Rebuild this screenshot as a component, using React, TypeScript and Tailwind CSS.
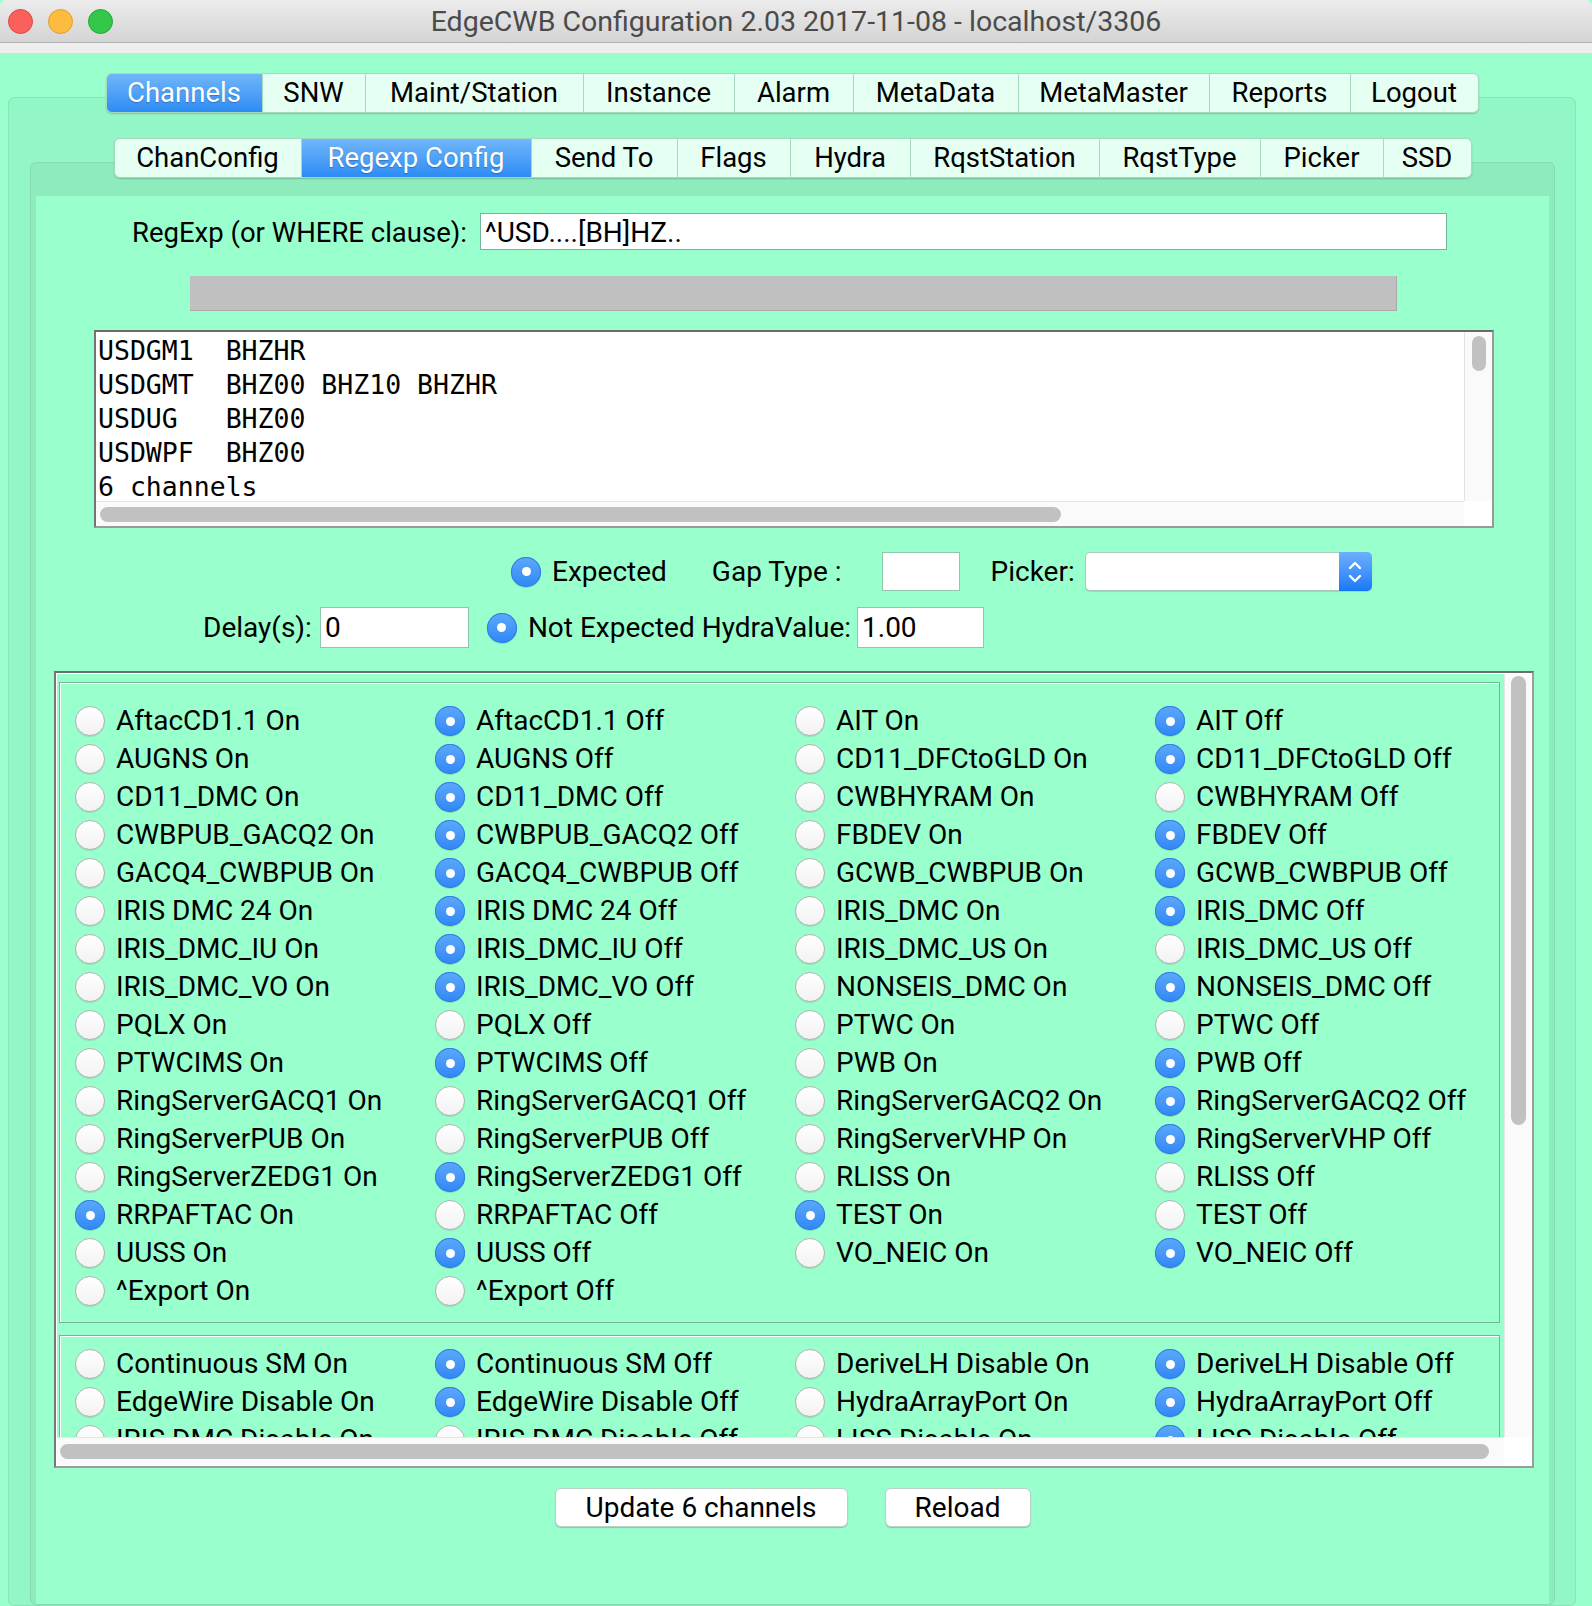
import React from 'react'

type Flag = { label: string; on: boolean }

const row = (a: string, b: boolean, c: string, d: boolean): Flag[] => [
  { label: `${a} On`, on: false },
  { label: `${a} Off`, on: b },
  { label: `${c} On`, on: false },
  { label: `${c} Off`, on: d },
]

const mainFlags: Flag[] = [
  ...row('AftacCD1.1', true, 'AIT', true),
  ...row('AUGNS', true, 'CD11_DFCtoGLD', true),
  ...row('CD11_DMC', true, 'CWBHYRAM', false),
  ...row('CWBPUB_GACQ2', true, 'FBDEV', true),
  ...row('GACQ4_CWBPUB', true, 'GCWB_CWBPUB', true),
  ...row('IRIS DMC 24', true, 'IRIS_DMC', true),
  ...row('IRIS_DMC_IU', true, 'IRIS_DMC_US', false),
  ...row('IRIS_DMC_VO', true, 'NONSEIS_DMC', true),
  ...row('PQLX', false, 'PTWC', false),
  ...row('PTWCIMS', true, 'PWB', true),
  ...row('RingServerGACQ1', false, 'RingServerGACQ2', true),
  ...row('RingServerPUB', false, 'RingServerVHP', true),
  ...row('RingServerZEDG1', true, 'RLISS', false),
  { label: 'RRPAFTAC On', on: true },
  { label: 'RRPAFTAC Off', on: false },
  { label: 'TEST On', on: true },
  { label: 'TEST Off', on: false },
  ...row('UUSS', true, 'VO_NEIC', true),
  { label: '^Export On', on: false },
  { label: '^Export Off', on: false },
]

const disableFlags: Flag[] = [
  ...row('Continuous SM', true, 'DeriveLH Disable', true),
  ...row('EdgeWire Disable', true, 'HydraArrayPort', true),
  ...row('IRIS DMC Disable', false, 'LISS Disable', true),
]

const topTabs = [
  { label: 'Channels', w: 'w-[157px]' },
  { label: 'SNW', w: 'w-[103px]' },
  { label: 'Maint/Station', w: 'w-[218px]' },
  { label: 'Instance', w: 'w-[151px]' },
  { label: 'Alarm', w: 'w-[119px]' },
  { label: 'MetaData', w: 'w-[165px]' },
  { label: 'MetaMaster', w: 'w-[191px]' },
  { label: 'Reports', w: 'w-[141px]' },
  { label: 'Logout', w: 'w-[128px]' },
]

const subTabs = [
  { label: 'ChanConfig', w: 'w-[188px]' },
  { label: 'Regexp Config', w: 'w-[230px]' },
  { label: 'Send To', w: 'w-[146px]' },
  { label: 'Flags', w: 'w-[113px]' },
  { label: 'Hydra', w: 'w-[120px]' },
  { label: 'RqstStation', w: 'w-[189px]' },
  { label: 'RqstType', w: 'w-[161px]' },
  { label: 'Picker', w: 'w-[123px]' },
  { label: 'SSD', w: 'w-[88px]' },
]

function Radio({ on }: { on: boolean }) {
  if (on) {
    return (
      <span className="w-[30px] h-[30px] shrink-0 rounded-full bg-linear-to-b from-[#5ea8fb] to-[#2f87f6] shadow-[inset_0_0_0_1px_#2a7fe6,0_1px_1px_rgba(0,0,0,0.15)] flex items-center justify-center">
        <span className="w-[9px] h-[9px] rounded-full bg-white" />
      </span>
    )
  }
  return (
    <span className="w-[30px] h-[30px] shrink-0 rounded-full bg-linear-to-b from-white to-[#f2f2f2] border border-[#b3b3b3] shadow-[0_1px_1px_rgba(0,0,0,0.12)]" />
  )
}

function TabBar({ tabs, active }: { tabs: { label: string; w: string }[]; active: number }) {
  return (
    <div className="relative z-10 flex justify-center h-[40px]">
      <div className="flex rounded-[6px] shadow-[0_1px_1.5px_rgba(0,0,0,0.2)]">
        {tabs.map((t, i) => (
          <div
            key={t.label}
            className={`${t.w} h-[40px] flex items-center justify-center text-[27.5px] border-y border-r border-[#a5d9c0] ${
              i === 0 ? 'rounded-l-[6px] border-l' : ''
            } ${i === tabs.length - 1 ? 'rounded-r-[6px]' : ''} ${
              i === active
                ? 'bg-linear-to-b from-[#70b6fa] to-[#2b8bf4] text-white border-[#3d8fe8] [text-shadow:0_1px_1px_rgba(0,0,0,0.25)]'
                : 'bg-[#e6fff3] text-black'
            }`}
          >
            {t.label}
          </div>
        ))}
      </div>
    </div>
  )
}

function FlagGrid({ flags }: { flags: Flag[] }) {
  return (
    <div className="grid grid-cols-[repeat(4,360px)] pl-[15px]">
      {flags.map((f, i) => (
        <div key={i} className="h-[38px] flex items-center gap-[11px] whitespace-nowrap">
          <Radio on={f.on} />
          <span>{f.label}</span>
        </div>
      ))}
    </div>
  )
}

export default function App() {
  return (
    <div className="w-[1592px] h-[1606px] overflow-hidden flex flex-col bg-[#99ffcc] font-[Roboto,sans-serif] text-black">
      {/* window title */}
      <div className="h-[43px] shrink-0 flex items-center relative bg-linear-to-b from-[#ececec] to-[#d4d4d4] border-b border-[#b0b0b0] rounded-t-[6px]">
        <div className="flex items-center gap-[15px] pl-[8px]">
          <span className="w-[25px] h-[25px] rounded-full bg-[#fc605c] border border-[#e0443e]" />
          <span className="w-[25px] h-[25px] rounded-full bg-[#fdbc40] border border-[#dea123]" />
          <span className="w-[25px] h-[25px] rounded-full bg-[#34c84a] border border-[#24a732]" />
        </div>
        <div className="absolute inset-0 pt-[2px] flex items-center justify-center text-[28.5px] text-[#4b4b4b]">
          EdgeCWB Configuration 2.03 2017-11-08 - localhost/3306
        </div>
      </div>
      <div className="h-[10px] shrink-0 bg-[#eeeeee]" />

      <div className="flex-1 flex flex-col pt-[20px] pl-[8px] pr-[16px]">
        <TabBar tabs={topTabs} active={0} />

        {/* outer tab panel */}
        <div className="-mt-[16px] flex-1 flex flex-col rounded-[6px] bg-[#93f6c6] border border-[#8be5b9] pt-[40px] pl-[21px] pr-[20px]">
          <TabBar tabs={subTabs} active={1} />

          {/* inner tab panel */}
          <div className="-mt-[16px] flex-1 flex flex-col rounded-[6px] bg-[#8eebbe] border border-[#86dcb2] pt-[33px] px-[5px]">
            <div className="flex-1 bg-[#99ffcc] text-[28px]">
              {/* regexp */}
              <div className="mt-[17px] h-[37px] flex items-center pl-[96px]">
                <div className="w-[348px] text-right pr-[16px] pt-[3px] whitespace-nowrap text-[27.5px]">RegExp (or WHERE clause):</div>
                <div className="w-[967px] h-[37px] bg-white border border-[#74b697] flex items-center pl-[4px] pt-[2px]">^USD....[BH]HZ..</div>
              </div>

              {/* progress bar */}
              <div className="mt-[26px] ml-[154px] w-[1207px] h-[35px] bg-[#c0c0c0] border-r border-b border-[#a9a9a9]" />

              {/* channel list */}
              <div className="mt-[19px] ml-[58px] w-[1400px] h-[198px] bg-white border-2 border-t-[#6a6a6a] border-l-[#747474] border-r-[#9a9a9a] border-b-[#9a9a9a] flex flex-col">
                <div className="flex-1 flex min-h-0">
                  <div className="flex-1 overflow-hidden pl-[2px] pt-[2px] font-['DejaVu_Sans_Mono',monospace] text-[26.5px] leading-[34px] whitespace-pre">
                    <div>USDGM1  BHZHR</div>
                    <div>USDGMT  BHZ00 BHZ10 BHZHR</div>
                    <div>USDUG   BHZ00</div>
                    <div>USDWPF  BHZ00</div>
                    <div>6 channels</div>
                  </div>
                  <div className="w-[28px] bg-[#fafafa] border-l border-[#e3e3e3] flex justify-center">
                    <div className="mt-[4px] w-[14px] h-[35px] rounded-full bg-[#c1c1c1]" />
                  </div>
                </div>
                <div className="h-[25px] flex">
                  <div className="flex-1 bg-[#fafafa] border-t border-[#e3e3e3] flex items-center">
                    <div className="ml-[4px] w-[961px] h-[15px] rounded-full bg-[#c1c1c1]" />
                  </div>
                  <div className="w-[28px] bg-white" />
                </div>
              </div>

              {/* expected row */}
              <div className="mt-[24px] h-[39px] flex items-center pl-[475px] whitespace-nowrap">
                <Radio on={true} />
                <span className="ml-[11px]">Expected</span>
                <span className="ml-[45px]">Gap Type :</span>
                <div className="ml-[40px] w-[78px] h-[39px] bg-white border border-[#8fc7ab]" />
                <span className="ml-[31px]">Picker:</span>
                <div className="ml-[10px] w-[287px] h-[39px] flex rounded-[5px] bg-white border border-[#a9ccba] shadow-[0_1px_1px_rgba(0,0,0,0.12)]">
                  <div className="flex-1" />
                  <div className="w-[33px] -my-px -mr-px rounded-r-[5px] bg-linear-to-b from-[#6cb0fc] to-[#1678f7] flex items-center justify-center">
                    <svg width="16" height="26" viewBox="0 0 16 26" fill="none" stroke="white" strokeWidth="2.4" strokeLinecap="round" strokeLinejoin="round">
                      <path d="M3 9 L8 4 L13 9" />
                      <path d="M3 17 L8 22 L13 17" />
                    </svg>
                  </div>
                </div>
              </div>

              {/* delay row */}
              <div className="mt-[16px] h-[41px] flex items-center pl-[167px] whitespace-nowrap">
                <span>Delay(s):</span>
                <div className="ml-[8px] w-[149px] h-[41px] bg-white border border-[#8fc7ab] flex items-center pl-[4px]">0</div>
                <span className="ml-[18px]"><Radio on={true} /></span>
                <span className="ml-[11px]">Not Expected HydraValue:</span>
                <div className="ml-[6px] w-[127px] h-[41px] bg-white border border-[#8fc7ab] flex items-center pl-[4px]">1.00</div>
              </div>

              {/* flags */}
              <div className="mt-[23px] ml-[18px] w-[1480px] h-[797px] border-2 border-t-[#6d6d6d] border-l-[#777777] border-r-[#9c9c9c] border-b-[#9c9c9c]">
                <div className="h-full border border-white flex flex-col">
                  <div className="flex-1 flex min-h-0">
                    <div className="flex-1 overflow-hidden pt-[8px] pl-[2px]">
                      <div className="w-[1441px] border border-[#72b697] shadow-[inset_1px_1px_0_white] pt-[19px] pb-[12px]">
                        <FlagGrid flags={mainFlags} />
                      </div>
                      <div className="mt-[12px] w-[1441px] border border-[#72b697] shadow-[inset_1px_1px_0_white] pt-[9px]">
                        <FlagGrid flags={disableFlags} />
                      </div>
                    </div>
                    <div className="w-[27px] bg-[#fafafa] border-l border-[#e6e6e6] flex justify-center">
                      <div className="mt-[2px] w-[15px] h-[449px] rounded-full bg-[#c1c1c1]" />
                    </div>
                  </div>
                  <div className="h-[28px] flex">
                    <div className="flex-1 bg-[#fafafa] border-t border-[#e6e6e6] flex items-center">
                      <div className="ml-[3px] w-[1429px] h-[15px] rounded-full bg-[#c1c1c1]" />
                    </div>
                    <div className="w-[27px] bg-white" />
                  </div>
                </div>
              </div>

              {/* buttons */}
              <div className="mt-[20px] flex justify-center gap-[37px]">
                <div className="w-[293px] h-[39px] bg-white rounded-[6px] border border-[#bcd2c7] shadow-[0_1px_1px_rgba(0,0,0,0.2)] flex items-center justify-center">Update 6 channels</div>
                <div className="w-[146px] h-[39px] bg-white rounded-[6px] border border-[#bcd2c7] shadow-[0_1px_1px_rgba(0,0,0,0.2)] flex items-center justify-center">Reload</div>
              </div>
            </div>
          </div>
        </div>
      </div>
    </div>
  )
}
